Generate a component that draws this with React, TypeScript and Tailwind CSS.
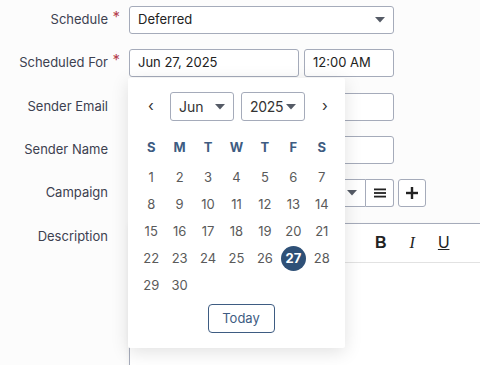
import React from "react";

const Caret = ({ className = "" }: { className?: string }) => (
  <svg width="10" height="6" viewBox="0 0 10 6" className={className}>
    <path d="M0 0 L10 0 L5 5.5 Z" fill="#555b66" />
  </svg>
);

const Label = ({ text, req }: { text: string; req?: boolean }) => (
  <div className="w-[128px] pr-[20px] flex justify-end items-center text-[13px] text-[#3c4150] relative shrink-0">
    <span>{text}</span>
    {req && <span className="absolute right-[8px] top-[-4px] text-[#b5414f] text-[15px]">*</span>}
  </div>
);

export default function App() {
  const days: number[] = [];
  for (let i = 1; i <= 30; i++) days.push(i);
  const heads = ["S", "M", "T", "W", "T", "F", "S"];
  return (
    <div
      className="w-[480px] h-[365px] bg-[#fcfcfc] relative overflow-hidden"
      style={{ fontFamily: "Inter, 'Noto Sans', sans-serif" }}
    >
      <div className="flex flex-col pt-[6px]">
        <div className="flex items-center h-[28px]">
          <Label text="Schedule" req />
          <div className="ml-[1px] w-[265px] h-[28px] border border-[#a5abba] rounded-[3px] bg-white flex items-center justify-between pl-[8px] pr-[8px] text-[13px] text-[#222]">
            <span>Deferred</span>
            <Caret />
          </div>
        </div>
        <div className="flex items-center h-[28px] mt-[15px]">
          <Label text="Scheduled For" req />
          <div className="ml-[1px] w-[170px] h-[28px] border border-[#a5abba] rounded-[3px] bg-white flex items-center pl-[8px] text-[13px] text-[#222]">
            Jun 27, 2025
          </div>
          <div className="ml-[5px] w-[90px] h-[28px] border border-[#a5abba] rounded-[3px] bg-white flex items-center pl-[8px] text-[13px] text-[#222]">
            12:00 AM
          </div>
        </div>
        <div className="flex items-center h-[28px] mt-[16px]">
          <Label text="Sender Email" />
          <div className="ml-[1px] w-[265px] h-[28px] border border-[#a5abba] rounded-[3px] bg-white" />
        </div>
        <div className="flex items-center h-[28px] mt-[15px]">
          <Label text="Sender Name" />
          <div className="ml-[1px] w-[265px] h-[28px] border border-[#a5abba] rounded-[3px] bg-white" />
        </div>
        <div className="flex items-center h-[28px] mt-[15px]">
          <Label text="Campaign" />
          <div className="ml-[1px] w-[237px] h-[28px] border border-[#a5abba] rounded-l-[3px] bg-white flex items-center justify-end pr-[8px]">
            <Caret />
          </div>
          <div className="w-[28px] h-[28px] border border-l-0 border-[#a5abba] rounded-r-[3px] bg-white flex items-center justify-center">
            <svg width="12" height="10" viewBox="0 0 12 10">
              <rect x="0" y="0.5" width="12" height="1.8" fill="#222" />
              <rect x="0" y="4.1" width="12" height="1.8" fill="#222" />
              <rect x="0" y="7.7" width="12" height="1.8" fill="#222" />
            </svg>
          </div>
          <div className="ml-[4px] w-[28px] h-[28px] border border-[#a5abba] rounded-[3px] bg-white flex items-center justify-center">
            <svg width="12" height="12" viewBox="0 0 12 12">
              <rect x="4.8" y="0" width="2.4" height="12" fill="#222" />
              <rect x="0" y="4.8" width="12" height="2.4" fill="#222" />
            </svg>
          </div>
        </div>
        <div className="flex mt-[16px]">
          <div className="w-[128px] pr-[20px] pt-[4px] flex justify-end text-[13px] text-[#3c4150] shrink-0">
            Description
          </div>
          <div className="ml-[1px] flex-1 border-l border-[#a5abba] bg-white h-[200px] shadow-[0_2px_6px_rgba(0,0,0,0.06)]">
            <div className="h-[40px] border-t border-b border-t-[#a5abba] border-b-[#e2e2e2] flex items-center pl-[245px] gap-[23px] text-[16px] text-[#222]">
              <span className="font-bold" style={{ fontFamily: "'Liberation Sans', sans-serif" }}>B</span>
              <span className="italic" style={{ fontFamily: "'Liberation Serif', serif" }}>I</span>
              <span className="underline" style={{ fontFamily: "'Liberation Sans', sans-serif" }}>U</span>
            </div>
          </div>
        </div>
      </div>

      <div className="absolute left-[128px] top-[78px] w-[217px] h-[270px] bg-white shadow-[0_4px_18px_rgba(0,0,0,0.12)] rounded-[2px] flex flex-col">
        <div className="flex items-center mt-[14px] h-[29px]">
          <span className="w-[42px] text-center text-[15px] text-[#333] pl-[4px]">‹</span>
          <div className="w-[64px] h-[29px] border border-[#a5abba] rounded-[3px] flex items-center justify-between pl-[8px] pr-[8px] text-[14px] text-[#333]">
            <span>Jun</span>
            <Caret />
          </div>
          <div className="ml-[7px] w-[64px] h-[29px] border border-[#a5abba] rounded-[3px] flex items-center justify-between pl-[8px] pr-[8px] text-[14px] text-[#333]">
            <span className="tracking-[-0.3px]">2025</span>
            <Caret />
          </div>
          <span className="w-[40px] text-center text-[15px] text-[#333]">›</span>
        </div>
        <div className="ml-[9px] w-[199px] mt-[15px] grid grid-cols-7 text-[13px]">
          {heads.map((h, i) => (
            <div key={i} className="h-[24px] flex items-center justify-center font-bold text-[#3e5c82]">
              {h}
            </div>
          ))}
        </div>
        <div className="ml-[9px] w-[199px] mt-[4px] grid grid-cols-7 text-[13px] text-[#5a5a5a]">
          {days.map((d) => (
            <div key={d} className="h-[27px] flex items-center justify-center">
              {d === 27 ? (
                <span className="w-[25px] h-[25px] rounded-full bg-[#2e5077] text-white font-bold flex items-center justify-center">
                  27
                </span>
              ) : (
                d
              )}
            </div>
          ))}
        </div>
        <div className="flex justify-center mt-[5px]">
          <div className="ml-[9px] w-[67px] h-[29px] border border-[#3e5c82] rounded-[4px] flex items-center justify-center text-[13px] text-[#3e5c82]">
            Today
          </div>
        </div>
      </div>
    </div>
  );
}
